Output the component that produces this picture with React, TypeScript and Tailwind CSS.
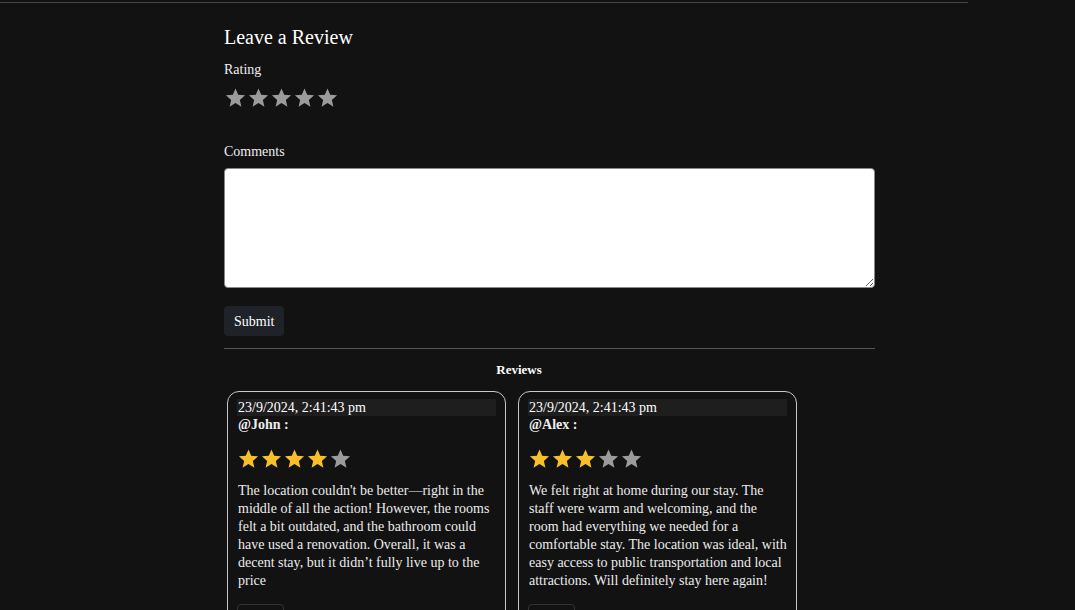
import React from 'react';

type Review = {
  date: string;
  user: string;
  rating: number;
  text: string;
};

const reviews: Review[] = [
  {
    date: '23/9/2024, 2:41:43 pm',
    user: 'John',
    rating: 4,
    text: "The location couldn't be better\u2014right in the middle of all the action! However, the rooms felt a bit outdated, and the bathroom could have used a renovation. Overall, it was a decent stay, but it didn\u2019t fully live up to the price",
  },
  {
    date: '23/9/2024, 2:41:43 pm',
    user: 'Alex',
    rating: 3,
    text: 'We felt right at home during our stay. The staff were warm and welcoming, and the room had everything we needed for a comfortable stay. The location was ideal, with easy access to public transportation and local attractions. Will definitely stay here again!',
  },
];

const Star = ({ filled }: { filled: boolean }) => (
  <svg viewBox="0 0 24 24" className={`h-[24px] w-[23px] ${filled ? 'fill-[#f8bf2a]' : 'fill-[#9b9b9b]'}`}>
    <path d="M12 17.27L18.18 21l-1.64-7.03L22 9.24l-7.19-.61L12 2 9.19 8.63 2 9.24l5.46 4.73L5.82 21z" />
  </svg>
);

const Stars = ({ value }: { value: number }) => (
  <div className="flex">
    {[1, 2, 3, 4, 5].map((i) => (
      <Star key={i} filled={i <= value} />
    ))}
  </div>
);

const ReviewCard = ({ review }: { review: Review }) => (
  <div className="w-[279px] rounded-[12px] border border-[#c8c8c8] px-[9px] pt-[7px]">
    <div className="bg-[#1e1e1e] text-[14px] leading-[17px] text-white pl-[1px]">{review.date}</div>
    <div className="text-[14px] leading-[17px] font-bold text-[#eeeeee] pl-[1px]">@{review.user} :</div>
    <div className="mt-[14px]">
      <Stars value={review.rating} />
    </div>
    <p className="mt-[11px] pl-[1px] text-[14px] leading-[18px] text-[#ececec]">{review.text}</p>
    <div className="mt-[14px] h-[24px] w-[47px] rounded-[4px] border border-[#333]"></div>
  </div>
);

export default function App() {
  return (
    <div className="h-[610px] overflow-hidden bg-[#121212] font-['Liberation_Serif',serif] text-[#eeeeee]">
      <div className="h-[3px] w-[968px] border-b border-[#444]"></div>

      <div className="ml-[224px] w-[651px]">
        <h2 className="pt-[20px] text-[20px] leading-[28px] text-white">Leave a Review</h2>
        <div className="mt-[9px] text-[14px] leading-[20px]">Rating</div>
        <div className="mt-[6px]">
          <Stars value={0} />
        </div>

        <div className="mt-[32px] text-[14px] leading-[20px]">Comments</div>
        <textarea className="mt-[6px] block h-[120px] w-full rounded-[4px] border border-[#888] bg-white text-black"></textarea>

        <button className="mt-[18px] h-[30px] rounded-[4px] bg-[#1f2229] px-[10px] text-[14px] text-white">
          Submit
        </button>

        <div className="mt-[12px] border-t border-[#555]"></div>

        <div className="w-[590px] pt-[12px] text-center text-[13px] leading-[18px] font-bold text-white">Reviews</div>

        <div className="mt-[12px] ml-[3px] flex gap-[12px]">
          {reviews.map((r) => (
            <ReviewCard key={r.user} review={r} />
          ))}
        </div>
      </div>
    </div>
  );
}
